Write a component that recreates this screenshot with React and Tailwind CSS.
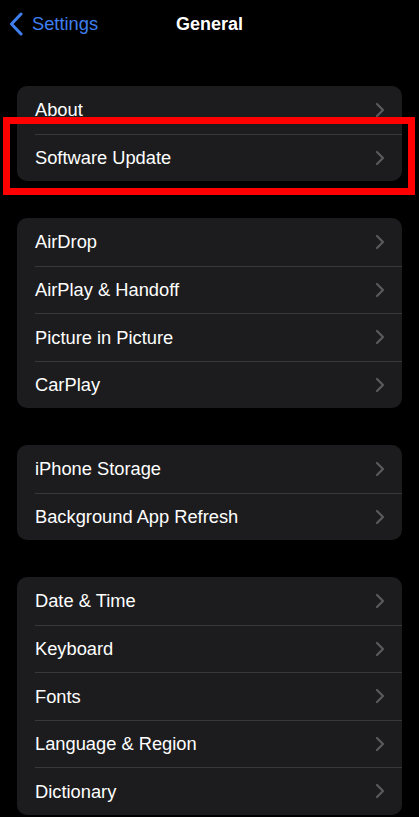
import React from 'react';

const groups = [
  ['About', 'Software Update'],
  ['AirDrop', 'AirPlay & Handoff', 'Picture in Picture', 'CarPlay'],
  ['iPhone Storage', 'Background App Refresh'],
  ['Date & Time', 'Keyboard', 'Fonts', 'Language & Region', 'Dictionary'],
];

function Chevron() {
  return (
    <svg width="10" height="16" viewBox="0 0 10 16" fill="none">
      <path
        d="M2 2 L8 8 L2 14"
        stroke="#5a5a5e"
        strokeWidth="2.2"
        strokeLinecap="round"
        strokeLinejoin="round"
      />
    </svg>
  );
}

function Row({ label, first }) {
  return (
    <div className="flex h-[47.5px] pl-[18px]">
      <div
        className={`flex flex-1 items-center justify-between pr-[17px] ${
          first ? '' : 'border-t border-[#38383a]'
        }`}
      >
        <span className="text-[18.3px] text-white">{label}</span>
        <Chevron />
      </div>
    </div>
  );
}

export default function App() {
  return (
    <div
      className="relative min-h-[817px] w-full bg-black pb-4"
      style={{ fontFamily: '"Liberation Sans", Arial, sans-serif' }}
    >
      {/* nav bar */}
      <header className="relative flex h-12 items-center">
        <div className="flex items-center gap-[9px] pl-[9px] text-[#3f7ff0]">
          <svg width="14" height="24" viewBox="0 0 14 24" fill="none">
            <path
              d="M12 2 L2.5 12 L12 22"
              stroke="#3f7ff0"
              strokeWidth="3"
              strokeLinecap="round"
              strokeLinejoin="round"
            />
          </svg>
          <span className="text-[18.3px]">Settings</span>
        </div>
        <h1 className="absolute left-1/2 -translate-x-1/2 text-[18px] font-bold text-white">
          General
        </h1>
      </header>

      <div className="flex flex-col gap-[37px] px-[17px] pt-[38px]">
        {groups.map((items, gi) => (
          <div key={gi} className="overflow-hidden rounded-[10px] bg-[#1c1c1e]">
            {items.map((label, i) => (
              <Row key={label} label={label} first={i === 0} />
            ))}
          </div>
        ))}
      </div>

      {/* highlight box */}
      <div className="pointer-events-none absolute left-[3px] top-[117px] h-[78px] w-[412px] border-[7px] border-[#ff0000]" />
    </div>
  );
}
